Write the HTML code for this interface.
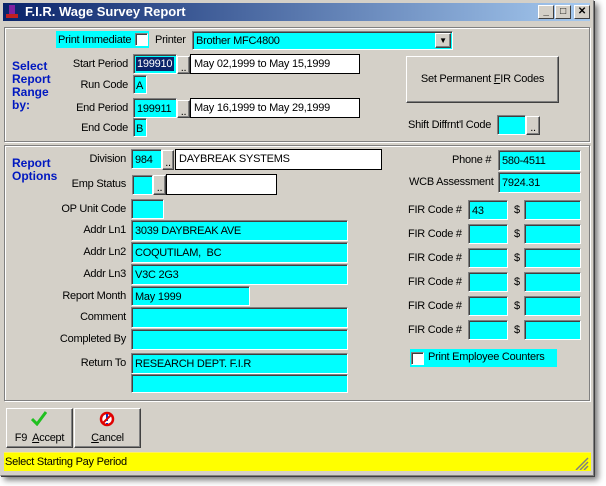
<!DOCTYPE html>
<html><head><style>
*{box-sizing:border-box}
body{margin:0;width:606px;height:486px;background:#fff;position:relative;overflow:hidden;font-family:"Liberation Sans",sans-serif;font-size:11px;color:#000;letter-spacing:-0.25px}
.a{position:absolute}
.win{left:0;top:0;width:594px;height:476px;background:#d4d0c8;border:1px solid #d4d0c8;box-shadow:1px 1px 0 #404040,4px 4px 6px rgba(0,0,0,.55);border-right-color:#808080;border-bottom-color:#808080}
.title{left:3px;top:3px;width:587px;height:18px;background:linear-gradient(90deg,#0a246a,#a6caf0);color:#fff;font-weight:bold;font-size:13px;line-height:18px;padding-left:22px;letter-spacing:0}
.tb{top:5px;width:16px;height:14px;background:#d4d0c8;border:1px solid;border-color:#fff #404040 #404040 #fff;font-size:10px;font-weight:bold;text-align:center;line-height:12px;color:#000}
.grp{border:1px solid #808080;box-shadow:inset 1px 1px 0 #fff,1px 1px 0 #fff}
.in{background:#0ff;border:1px solid;border-color:#808080 #fff #fff #808080;box-shadow:inset 1px 1px 0 #404040;padding:4px 0 0 3px;white-space:nowrap;overflow:hidden}
.wh{background:#fff;border:1px solid #000;padding:3px 0 0 3px;white-space:nowrap}
.btn{background:#d4d0c8;border:1px solid;border-color:#fff #404040 #404040 #fff;box-shadow:inset -1px -1px 0 #808080;text-align:center}
.lb{text-align:right;width:120px}
.blue{color:#0018c0;font-weight:bold;font-size:12px;line-height:13px;letter-spacing:0}
.cb{width:13px;height:13px;background:#fff;border:1px solid;border-color:#808080 #fff #fff #808080;box-shadow:inset 1px 1px 0 #404040}
</style></head><body>
<div class="a win"></div>
<div class="a title">F.I.R. Wage Survey Report</div>
<div class="a" style="left:6px;top:5px;width:12px;height:14px;"><div class="a" style="left:3px;top:0;width:6px;height:9px;background:#8020a0"></div><div class="a" style="left:0;top:9px;width:12px;height:4px;background:#c02020"></div></div>
<div class="a tb" style="left:538px">_</div>
<div class="a tb" style="left:555px">□</div>
<div class="a tb" style="left:574px">✕</div>

<div class="a grp" style="left:4px;top:27px;width:586px;height:115px"></div>
<div class="a grp" style="left:4px;top:145px;width:586px;height:256px"></div>

<div class="a blue" style="left:12px;top:60px">Select<br>Report<br>Range<br>by:</div>
<div class="a" style="left:56px;top:31px;width:93px;height:17px;background:#0ff;padding:3px 0 0 2px">Print Immediate</div>
<div class="a cb" style="left:135px;top:33px"></div>
<div class="a" style="left:155px;top:34px">Printer</div>
<div class="a in" style="left:192px;top:31px;width:261px;height:19px;padding-top:3px">Brother MFC4800</div>
<div class="a btn" style="left:435px;top:33px;width:16px;height:15px;font-size:8px;line-height:13px">▼</div>

<div class="a lb" style="left:8px;top:58px">Start Period</div>
<div class="a in" style="left:133px;top:54px;width:44px;height:20px;padding:2px"><span style="background:#0a246a;color:#fff;display:block;height:14px;padding:1px 0 0 1px">199910</span></div>
<div class="a btn" style="left:177px;top:56px;width:13px;height:18px;line-height:22px">..</div>
<div class="a wh" style="left:190px;top:54px;width:170px;height:20px">May 02,1999 to May 15,1999</div>
<div class="a lb" style="left:8px;top:79px">Run Code</div>
<div class="a in" style="left:133px;top:75px;width:14px;height:19px;padding-left:2px">A</div>
<div class="a lb" style="left:8px;top:102px">End Period</div>
<div class="a in" style="left:133px;top:98px;width:44px;height:20px">199911</div>
<div class="a btn" style="left:177px;top:100px;width:13px;height:18px;line-height:22px">..</div>
<div class="a wh" style="left:190px;top:98px;width:170px;height:20px">May 16,1999 to May 29,1999</div>
<div class="a lb" style="left:8px;top:122px">End Code</div>
<div class="a in" style="left:133px;top:118px;width:14px;height:19px;padding-left:2px">B</div>

<div class="a btn" style="left:406px;top:56px;width:153px;height:47px;line-height:45px">Set Permanent <u>F</u>IR Codes</div>
<div class="a" style="left:408px;top:119px">Shift Diffrnt'l Code</div>
<div class="a in" style="left:497px;top:115px;width:29px;height:20px"></div>
<div class="a btn" style="left:526px;top:116px;width:14px;height:19px;line-height:22px">..</div>

<div class="a blue" style="left:12px;top:157px">Report<br>Options</div>
<div class="a lb" style="left:6px;top:153px">Division</div>
<div class="a in" style="left:131px;top:149px;width:31px;height:20px">984</div>
<div class="a btn" style="left:162px;top:150px;width:12px;height:20px;line-height:24px">..</div>
<div class="a wh" style="left:175px;top:149px;width:207px;height:21px">DAYBREAK SYSTEMS</div>
<div class="a lb" style="left:6px;top:178px">Emp Status</div>
<div class="a in" style="left:132px;top:175px;width:21px;height:20px"></div>
<div class="a btn" style="left:153px;top:175px;width:13px;height:20px;line-height:24px">..</div>
<div class="a wh" style="left:166px;top:174px;width:111px;height:21px"></div>
<div class="a lb" style="left:6px;top:203px">OP Unit Code</div>
<div class="a in" style="left:131px;top:199px;width:33px;height:20px"></div>
<div class="a lb" style="left:6px;top:224px">Addr Ln1</div>
<div class="a in" style="left:131px;top:220px;width:217px;height:21px">3039 DAYBREAK AVE</div>
<div class="a lb" style="left:6px;top:246px">Addr Ln2</div>
<div class="a in" style="left:131px;top:242px;width:217px;height:21px">COQUTILAM,&nbsp; BC</div>
<div class="a lb" style="left:6px;top:268px">Addr Ln3</div>
<div class="a in" style="left:131px;top:264px;width:217px;height:21px">V3C 2G3</div>
<div class="a lb" style="left:6px;top:290px">Report Month</div>
<div class="a in" style="left:131px;top:286px;width:119px;height:20px">May 1999</div>
<div class="a lb" style="left:6px;top:311px">Comment</div>
<div class="a in" style="left:131px;top:307px;width:217px;height:21px"></div>
<div class="a lb" style="left:6px;top:333px">Completed By</div>
<div class="a in" style="left:131px;top:329px;width:217px;height:21px"></div>
<div class="a lb" style="left:6px;top:357px">Return To</div>
<div class="a in" style="left:131px;top:353px;width:217px;height:21px">RESEARCH DEPT. F.I.R</div>
<div class="a in" style="left:131px;top:374px;width:217px;height:19px"></div>

<div class="a" style="left:452px;top:154px">Phone #</div>
<div class="a in" style="left:498px;top:150px;width:83px;height:21px">580-4511</div>
<div class="a" style="left:409px;top:176px">WCB Assessment</div>
<div class="a in" style="left:498px;top:172px;width:83px;height:21px">7924.31</div>

<div class="a" style="left:408px;top:204px">FIR Code #</div><div class="a in" style="left:468px;top:200px;width:40px;height:20px">43</div><div class="a" style="left:514px;top:204px">$</div><div class="a in" style="left:524px;top:200px;width:57px;height:20px"></div>
<div class="a" style="left:408px;top:228px">FIR Code #</div><div class="a in" style="left:468px;top:224px;width:40px;height:20px"></div><div class="a" style="left:514px;top:228px">$</div><div class="a in" style="left:524px;top:224px;width:57px;height:20px"></div>
<div class="a" style="left:408px;top:252px">FIR Code #</div><div class="a in" style="left:468px;top:248px;width:40px;height:20px"></div><div class="a" style="left:514px;top:252px">$</div><div class="a in" style="left:524px;top:248px;width:57px;height:20px"></div>
<div class="a" style="left:408px;top:276px">FIR Code #</div><div class="a in" style="left:468px;top:272px;width:40px;height:20px"></div><div class="a" style="left:514px;top:276px">$</div><div class="a in" style="left:524px;top:272px;width:57px;height:20px"></div>
<div class="a" style="left:408px;top:300px">FIR Code #</div><div class="a in" style="left:468px;top:296px;width:40px;height:20px"></div><div class="a" style="left:514px;top:300px">$</div><div class="a in" style="left:524px;top:296px;width:57px;height:20px"></div>
<div class="a" style="left:408px;top:324px">FIR Code #</div><div class="a in" style="left:468px;top:320px;width:40px;height:20px"></div><div class="a" style="left:514px;top:324px">$</div><div class="a in" style="left:524px;top:320px;width:57px;height:20px"></div>

<div class="a" style="left:410px;top:349px;width:147px;height:18px;background:#0ff;padding:2px 0 0 18px">Print Employee Counters</div>
<div class="a cb" style="left:411px;top:352px"></div>

<div class="a btn" style="left:6px;top:408px;width:67px;height:40px;padding-top:23px">F9&nbsp; <u>A</u>ccept</div>
<svg class="a" style="left:31px;top:411px" width="16" height="15"><path d="M1 8 L6 13 L15 1" stroke="#20c020" stroke-width="3" fill="none"/></svg>
<div class="a btn" style="left:74px;top:408px;width:67px;height:40px;padding-top:23px"><u>C</u>ancel</div>
<svg class="a" style="left:99px;top:411px" width="16" height="16"><circle cx="8" cy="8" r="6" stroke="#e00000" stroke-width="2.5" fill="#fff"/><path d="M8 3 V10 M8 12 V13" stroke="#1030c0" stroke-width="2"/><path d="M3.5 12.5 L12.5 3.5" stroke="#e00000" stroke-width="2"/></svg>

<div class="a" style="left:4px;top:452px;width:587px;height:19px;background:#ffff00;border-top:1px solid #fff060;padding:3px 0 0 1px">Select Starting Pay Period</div>
<svg class="a" style="left:575px;top:457px" width="14" height="13"><path d="M13 1 L1 13 M13 5 L5 13 M13 9 L9 13" stroke="#808080" stroke-width="1.5"/></svg>
</body></html>
